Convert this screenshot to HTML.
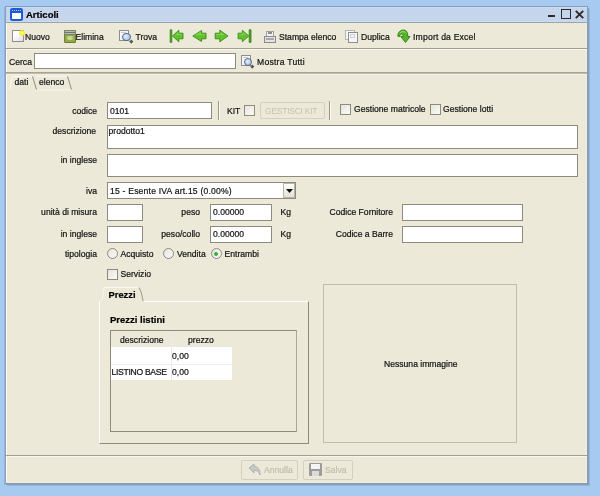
<!DOCTYPE html>
<html><head><meta charset="utf-8">
<style>
*{box-sizing:border-box;margin:0;padding:0}
html,body{width:600px;height:496px;overflow:hidden;background:#a6caf0;font-family:"Liberation Sans",sans-serif}
.a{position:absolute}
.t{position:absolute;font-size:8.6px;line-height:10px;white-space:nowrap;color:#111;-webkit-text-stroke-width:0.2px}
#w{position:absolute;left:0;top:0;width:600px;height:496px;will-change:transform}
.b{font-weight:bold}
.r{text-align:right}
.in{position:absolute;background:#fff;border:1px solid #8e8b7e}
.cb{position:absolute;width:11px;height:11px;border:1px solid #8e8b7e;background:linear-gradient(135deg,#e6e4da,#fbfbf8)}
.rd{position:absolute;width:11px;height:11px;border:1px solid #8e8b7e;border-radius:50%;background:linear-gradient(135deg,#e6e4da,#fbfbf8)}
.hl{position:absolute;height:1px}
.vl{position:absolute;width:1px}
</style></head><body><div id="w">
<!-- window shadow -->
<div class="a" style="left:7px;top:9px;width:582.5px;height:476.5px;background:#95b4d8"></div>
<div class="a" style="left:6px;top:8px;width:583px;height:477px;background:#86a3c4"></div>
<div class="vl" style="left:4px;top:7px;height:478px;background:#98b4d8"></div>
<!-- window -->
<div class="a" style="left:5px;top:6px;width:583px;height:478px;background:#ece9d8;border:1px solid #86a0c0;border-top-color:#7f9fc0;border-right-color:#8a98aa;border-bottom-color:#8a98aa"></div>
<div class="vl" style="left:6px;top:23px;height:460px;background:#fbfaf4"></div>
<div class="hl" style="left:6px;top:482px;width:581px;background:#f3efe6"></div>
<div class="vl" style="left:586px;top:23px;height:460px;background:#f3efe6"></div>
<!-- title bar -->
<div class="a" style="left:5px;top:6px;width:583px;height:17px;background:#c5d5ec;border:1px solid #7f9fc0;border-bottom:1px solid #98a4ae"></div>
<div class="hl" style="left:6px;top:7px;width:581px;background:#cfdcf0"></div>
<div class="hl" style="left:6px;top:21px;width:581px;background:#cddbee"></div>
<!-- title icon -->
<div class="a" style="left:10px;top:8px;width:13px;height:13px;border:2px solid #1f5ad6;border-radius:2.5px;background:#fff"></div>
<div class="a" style="left:11px;top:9px;width:11px;height:4px;background:#1f5ad6"></div>
<div class="a" style="left:12px;top:10px;width:1px;height:1px;background:#b8cdf4"></div>
<div class="a" style="left:14px;top:10px;width:1px;height:1px;background:#b8cdf4"></div>
<div class="a" style="left:16px;top:10px;width:1px;height:1px;background:#b8cdf4"></div>
<div class="a" style="left:18px;top:10px;width:1px;height:1px;background:#b8cdf4"></div>
<div class="a" style="left:20px;top:10px;width:1px;height:1px;background:#b8cdf4"></div>
<div class="t b" style="left:26px;top:10px;font-size:9.5px;color:#000">Articoli</div>
<!-- title buttons -->
<div class="a" style="left:548px;top:15.3px;width:7px;height:1.9px;background:#2a2a2a"></div>
<div class="a" style="left:561px;top:9.2px;width:9.5px;height:9.5px;border:1.9px solid #2a2a2a"></div>
<svg class="a" style="left:575px;top:10px" width="9" height="9" viewBox="0 0 9 9"><path d="M0.8 0.8L8.2 8.2M8.2 0.8L0.8 8.2" stroke="#2a2a2a" stroke-width="1.9"/></svg>

<!-- toolbar -->
<div class="hl" style="left:6px;top:48px;width:581px;background:#a29f91"></div>
<div class="hl" style="left:6px;top:49px;width:581px;background:#f8f7f0"></div>
<!-- Nuovo icon -->
<div class="a" style="left:12px;top:30px;width:11.5px;height:11.5px;border:1.3px solid #8e8e8e;background:linear-gradient(135deg,#fff 30%,#e0dcec)"></div>
<div class="a" style="left:18.5px;top:29.5px;width:6px;height:6px;border-radius:50%;background:radial-gradient(circle at 50% 50%,#fbfb9a 0,#f0ee2a 55%,rgba(240,238,42,0.3) 100%)"></div>
<div class="t" style="left:25px;top:32.3px">Nuovo</div>
<!-- Elimina icon -->
<div class="a" style="left:64px;top:30px;width:11.5px;height:12.5px;background:#93ab45;border:1px solid #6c7d33;border-radius:1px"></div>
<div class="a" style="left:64px;top:30px;width:11.5px;height:4.5px;background:#b9bda6;border:1px solid #7d8560"></div>
<div class="a" style="left:65px;top:31.8px;width:9.5px;height:1.4px;background:#64709a"></div>
<div class="a" style="left:67px;top:36px;width:5.5px;height:4px;border-radius:2px;background:#c6d88e"></div>
<div class="t" style="left:75.5px;top:32.3px">Elimina</div>
<!-- Trova icon -->
<div class="a" style="left:119px;top:30px;width:9.5px;height:10.5px;border:1.2px solid #8e8e8e;background:#f6f6fa"></div>
<div class="a" style="left:121px;top:32px;width:5px;height:1px;background:#c8c8d0"></div>
<div class="a" style="left:122px;top:32.5px;width:8.5px;height:8.5px;border:1.1px solid #5a6a80;border-radius:50%;background:radial-gradient(circle at 40% 40%,#e4f0ff,#8fb4e6)"></div>
<div class="a" style="left:129.5px;top:40px;width:2.5px;height:2.5px;background:#5a5a5a;transform:rotate(45deg)"></div>
<div class="t" style="left:135.5px;top:32.3px">Trova</div>
<!-- nav arrows -->
<svg class="a" style="left:169px;top:29px" width="84" height="14" viewBox="0 0 84 14">
 <g fill="#62c22e" stroke="#3b8a1a" stroke-width="0.9" stroke-linejoin="round">
  <rect x="1.2" y="0.8" width="1.6" height="12.6" fill="#4f9a22"/>
  <path d="M3.5 7L9.8 1.2V4.2H14V9.8H9.8V12.8Z"/>
  <path d="M23.8 7L32.6 1.5V4.2H37V9.8H32.6V12.5Z"/>
  <path d="M59 7L50.8 1.2V4.2H46.2V9.8H50.8V12.8Z"/>
  <path d="M79.8 7L73.3 1.2V4.2H69.1V9.8H73.3V12.8Z"/>
  <rect x="80.2" y="0.8" width="1.8" height="12.6" fill="#4f9a22"/>
 </g>
 <g fill="#8ad85a" opacity="0.7">
  <path d="M6 6L9.5 3V5H13V6Z"/>
  <path d="M26 6L32 2.5V5H36V6Z"/>
  <path d="M47 5H51V3L56 6H47Z"/>
  <path d="M70 5H73.5V3L77 6H70Z"/>
 </g>
</svg>
<!-- printer -->
<div class="a" style="left:265.5px;top:30.5px;width:8px;height:6px;border:1px solid #a0a0a0;background:#f4f4f4"></div>
<div class="a" style="left:267.5px;top:32px;width:4px;height:2px;background:#8a8a8a"></div>
<div class="a" style="left:264px;top:36px;width:11.5px;height:6.5px;border:1.2px solid #8a8a8a;background:#e4e4e4"></div>
<div class="a" style="left:266px;top:38px;width:7.5px;height:2px;background:#a8a8a8"></div>
<div class="t" style="left:279px;top:32.3px">Stampa elenco</div>
<!-- duplica -->
<div class="a" style="left:345px;top:30px;width:10px;height:9.5px;border:1px solid #b4b4b4;background:#f8f8f4"></div>
<div class="a" style="left:348px;top:32px;width:9.5px;height:10.5px;border:1.2px solid #8e8e8e;background:#f6f6fa"></div>
<div class="a" style="left:350px;top:34px;width:5px;height:4px;border:1px solid #cfcfd6"></div>
<div class="t" style="left:361px;top:32.3px">Duplica</div>
<!-- import -->
<svg class="a" style="left:397px;top:29px" width="14" height="14" viewBox="0 0 14 14"><path d="M0.8 7.2C0.8 3.2 3.5 1 6.5 1C9.5 1 10.8 3.5 10.8 7.5H13L8.5 13.5L3.8 7.5H6.2C6.2 6 5.8 5 4.6 5C3.5 5 3 6 2.8 7.5Z" fill="#52b82a" stroke="#2f7a16" stroke-width="0.9" stroke-linejoin="round"/><path d="M3 4C4 2.5 7 2 8.5 3.5" stroke="#9be070" stroke-width="1" fill="none"/></svg>
<div class="t" style="left:413px;top:32.3px;letter-spacing:0.2px">Import da Excel</div>

<!-- search row -->
<div class="t" style="left:9px;top:57px">Cerca</div>
<div class="in" style="left:34px;top:53px;width:202px;height:16px"></div>
<div class="a" style="left:241px;top:55px;width:10px;height:10.5px;border:1.2px solid #8e8e8e;background:#f6f6fa"></div>
<div class="a" style="left:243px;top:57px;width:5px;height:1px;background:#c8c8d0"></div>
<div class="a" style="left:243.8px;top:57.8px;width:8.5px;height:8.5px;border:1.1px solid #5a6a80;border-radius:50%;background:radial-gradient(circle at 40% 40%,#e4f0ff,#8fb4e6)"></div>
<div class="a" style="left:251.3px;top:65.3px;width:2.5px;height:2.5px;background:#5a5a5a;transform:rotate(45deg)"></div>
<div class="t" style="left:257px;top:57px;letter-spacing:0.25px">Mostra Tutti</div>
<div class="hl" style="left:6px;top:72px;width:581px;background:#a9a696"></div>
<div class="hl" style="left:6px;top:73px;width:581px;background:#bdbaa9"></div>
<div class="hl" style="left:6px;top:74px;width:581px;background:#f4f2ea"></div>

<!-- tabs -->
<svg class="a" style="left:0;top:70px" width="100" height="24" viewBox="0 0 100 24">
 <path d="M9.5 19.5L12.5 6.5H32" fill="none" stroke="#fbfaf4" stroke-width="1"/>
 <path d="M37 6.5H67" fill="none" stroke="#f6f5ee" stroke-width="1"/>
 <path d="M36.5 20H71" fill="none" stroke="#f6f5ee" stroke-width="1"/>
 <path d="M32.5 6.5L36.5 19.5" fill="none" stroke="#8f8c7e" stroke-width="1"/>
 <path d="M67.5 6.5L71.5 19.5" fill="none" stroke="#8f8c7e" stroke-width="1"/>
</svg>
<div class="t" style="left:14.5px;top:77.2px">dati</div>
<div class="t" style="left:39px;top:77.2px">elenco</div>

<!-- form -->
<div class="t r" style="left:40px;width:57px;top:106px">codice</div>
<div class="in" style="left:107px;top:102px;width:105px;height:17px"></div>
<div class="t" style="left:110px;top:106px">0101</div>
<div class="vl" style="left:218px;top:101px;height:19px;background:#9a9788"></div><div class="vl" style="left:219px;top:101px;height:19px;background:#faf9f2"></div>
<div class="t" style="left:227px;top:106px">KIT</div>
<div class="cb" style="left:244px;top:105px"></div>
<div class="a" style="left:260px;top:102px;width:65px;height:17px;border:1px solid #d3d0c0;border-radius:2px"></div>
<div class="t" style="left:265px;top:106px;color:#c5c2b2;letter-spacing:-0.3px;-webkit-text-stroke-width:0">GESTISCI KIT</div>
<div class="vl" style="left:329px;top:101px;height:19px;background:#9a9788"></div><div class="vl" style="left:330px;top:101px;height:19px;background:#faf9f2"></div>
<div class="cb" style="left:340px;top:104px"></div>
<div class="t" style="left:354px;top:103.8px">Gestione matricole</div>
<div class="cb" style="left:430px;top:104px"></div>
<div class="t" style="left:443px;top:103.8px">Gestione lotti</div>

<div class="t r" style="left:30px;width:66px;top:125.7px">descrizione</div>
<div class="in" style="left:107px;top:125px;width:471px;height:24px"></div>
<div class="t" style="left:108.5px;top:125.5px">prodotto1</div>

<div class="t r" style="left:30px;width:67px;top:155px">in inglese</div>
<div class="in" style="left:107px;top:154px;width:471px;height:23px"></div>

<div class="t r" style="left:30px;width:67px;top:185.5px">iva</div>
<div class="in" style="left:107px;top:182px;width:189px;height:17px"></div>
<div class="t" style="left:110px;top:185.5px;letter-spacing:0.2px">15 - Esente IVA art.15 (0.00%)</div>
<div class="a" style="left:283px;top:183px;width:12px;height:15px;border:1px solid #b9b6a8;background:linear-gradient(#fff,#e2e0d6)"></div>
<svg class="a" style="left:286px;top:189px" width="7" height="4" viewBox="0 0 7 4"><path d="M0 0H7L3.5 4Z" fill="#111"/></svg>

<div class="t r" style="left:20px;width:77px;top:207px">unità di misura</div>
<div class="in" style="left:107px;top:204px;width:36px;height:17px"></div>
<div class="t r" style="left:150px;width:50px;top:207px">peso</div>
<div class="in" style="left:210px;top:204px;width:62px;height:17px"></div>
<div class="t" style="left:213px;top:207px">0.00000</div>
<div class="t" style="left:280.5px;top:207px">Kg</div>
<div class="t r" style="left:300px;width:93px;top:207px">Codice Fornitore</div>
<div class="in" style="left:402px;top:204px;width:121px;height:17px"></div>

<div class="t r" style="left:20px;width:77px;top:228.5px">in inglese</div>
<div class="in" style="left:107px;top:226px;width:36px;height:17px"></div>
<div class="t r" style="left:150px;width:50px;top:228.5px">peso/collo</div>
<div class="in" style="left:210px;top:226px;width:62px;height:17px"></div>
<div class="t" style="left:213px;top:228.5px">0.00000</div>
<div class="t" style="left:280.5px;top:228.5px">Kg</div>
<div class="t r" style="left:300px;width:93px;top:228.5px">Codice a Barre</div>
<div class="in" style="left:402px;top:226px;width:121px;height:17px"></div>

<div class="t r" style="left:20px;width:77px;top:248.7px">tipologia</div>
<div class="rd" style="left:107px;top:248px"></div>
<div class="t" style="left:120.5px;top:248.7px">Acquisto</div>
<div class="rd" style="left:163px;top:248px"></div>
<div class="t" style="left:177px;top:248.7px">Vendita</div>
<div class="rd" style="left:210.5px;top:248px"></div>
<div class="a" style="left:214px;top:251.5px;width:4px;height:4px;border-radius:50%;background:#3cae3c"></div>
<div class="t" style="left:224.5px;top:248.7px">Entrambi</div>

<div class="cb" style="left:107px;top:269px"></div>
<div class="t" style="left:120.5px;top:269px">Servizio</div>

<!-- Prezzi tabbed panel -->
<div class="a" style="left:99px;top:301px;width:210px;height:143px;border-left:1px solid #fff;border-top:1px solid #fff;border-right:1px solid #8e8b7e;border-bottom:1px solid #8e8b7e"></div>
<svg class="a" style="left:98px;top:285px" width="50" height="18" viewBox="0 0 50 18">
 <path d="M1.5 16.5L4 15L6.2 2.5H41" fill="none" stroke="#f9f8f1" stroke-width="1"/>
 <path d="M41 2.5Q43 5 45.2 16.3" fill="none" stroke="#9b9889" stroke-width="1"/>
</svg>
<div class="a" style="left:100px;top:301px;width:43px;height:2px;background:#ece9d8"></div>
<div class="t b" style="left:108.5px;top:290px;font-size:9.4px;color:#000">Prezzi</div>
<div class="t b" style="left:110px;top:315.4px;font-size:9.5px;color:#000">Prezzi listini</div>

<!-- table -->
<div class="a" style="left:110px;top:330px;width:187px;height:102px;border:1px solid #8e8b7e;border-right-color:#aaa796;border-bottom-color:#8e8b7e"></div>
<div class="a" style="left:111px;top:347px;width:121px;height:33px;background:#fff"></div>
<div class="hl" style="left:111px;top:364px;width:121px;background:#eeeeee"></div>
<div class="vl" style="left:171px;top:331px;height:49px;background:#ebebe6"></div>
<div class="t" style="left:120px;top:335.3px">descrizione</div>
<div class="t" style="left:188px;top:335.3px">prezzo</div>
<div class="t" style="left:172px;top:351px">0,00</div>
<div class="t" style="left:111.5px;top:366.6px;letter-spacing:-0.3px">LISTINO BASE</div>
<div class="t" style="left:172px;top:366.6px">0,00</div>

<!-- image panel -->
<div class="a" style="left:323px;top:284px;width:194px;height:159px;border:1px solid #c0bdae"></div>
<div class="t" style="left:384px;top:359px">Nessuna immagine</div>

<!-- bottom -->
<div class="hl" style="left:6px;top:455px;width:581px;background:#a29f91"></div>
<div class="hl" style="left:6px;top:456px;width:581px;background:#f7f6ee"></div>
<div class="a" style="left:241px;top:460px;width:57px;height:20px;border:1px solid #d3d0c0;border-radius:2px"></div>
<svg class="a" style="left:248px;top:463px" width="13" height="13" viewBox="0 0 13 13"><path d="M1 5L6 1V3.5C10 3.5 12 6 12 12C11 8.5 9 7.5 6 7.5V10Z" fill="#c8c8c8" stroke="#a8a8a8" stroke-width="0.8"/></svg>
<div class="t" style="left:264px;top:465px;color:#c0bdae">Annulla</div>
<div class="a" style="left:303px;top:460px;width:50px;height:20px;border:1px solid #d3d0c0;border-radius:2px"></div>
<div class="a" style="left:309px;top:463px;width:13px;height:13px;background:#9c9c9c;border-radius:1px"></div>
<div class="a" style="left:311px;top:464px;width:9px;height:5px;background:#f4f4f4"></div>
<div class="a" style="left:312px;top:471px;width:7px;height:5px;background:#dadada"></div>
<div class="t" style="left:325px;top:465px;color:#c0bdae">Salva</div>
</div></body></html>
